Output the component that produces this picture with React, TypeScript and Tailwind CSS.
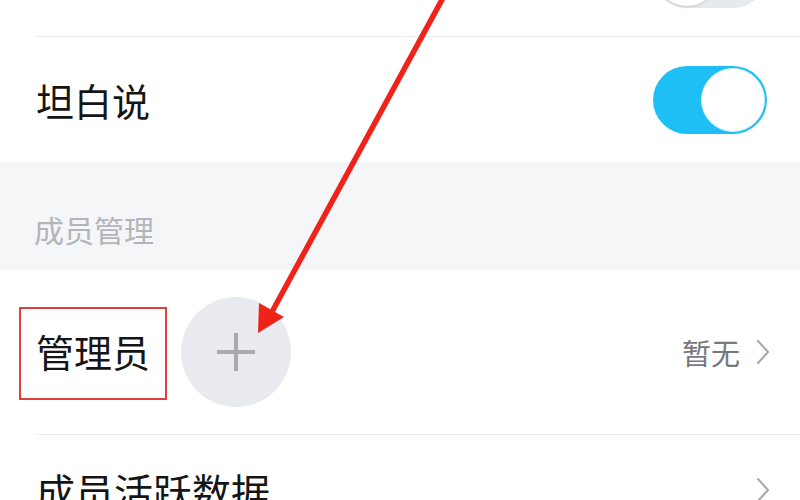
import React from "react";

const font = { fontFamily: '"Noto Sans CJK SC", "Noto Sans", sans-serif' };

function Chevron() {
  return (
    <svg width="14" height="28" viewBox="0 0 14 28" className="shrink-0">
      <path d="M2 3 L12 14 L2 25" fill="none" stroke="#a9abb0" strokeWidth="2.2" strokeLinecap="round" strokeLinejoin="round" />
    </svg>
  );
}

export default function App() {
  return (
    <div className="relative w-[800px] h-[500px] overflow-hidden bg-white" style={font}>
      <div className="flex flex-col -mt-[89px]">
        {/* row 1 (cut off) */}
        <div className="h-[125px] flex items-center justify-between pl-[36px] pr-[33px] bg-white">
          <span className="text-[38px] leading-none text-[#222]">匿名聊天</span>
          <div className="w-[114px] h-[68px] rounded-full bg-[#e8e9ef] p-[2px] flex items-center">
            <div className="w-[64px] h-[64px] rounded-full bg-white shadow-[0_1px_3px_rgba(0,0,0,0.15)]" />
          </div>
        </div>
        <div className="ml-[36px] h-px bg-[#ececee]" />
        {/* row 2 */}
        <div className="h-[125px] flex items-center justify-between pl-[36px] pr-[33px] bg-white">
          <span className="text-[38px] leading-none text-[#151515]">坦白说</span>
          <div className="w-[114px] h-[68px] rounded-full bg-[#1ebff4] p-[2px] flex items-center justify-end">
            <div className="w-[64px] h-[64px] rounded-full bg-white border border-[#d6eef8]" />
          </div>
        </div>
        {/* section header */}
        <div className="h-[108px] bg-[#f5f6f8] flex items-end pl-[34px] pb-[26px]">
          <span className="text-[30px] leading-none text-[#b3b5ba]">成员管理</span>
        </div>
        {/* row 3 */}
        <div className="h-[164px] flex items-center justify-between pl-[36px] pr-[30px] bg-white">
          <div className="flex items-center">
            <div className="relative">
              <span className="text-[38px] leading-none text-[#151515]">管理员</span>
              <div className="absolute -left-[17px] -right-[17px] -top-[25px] -bottom-[28px] border-2 border-[#e0403c]" />
            </div>
            <div className="ml-[31px] w-[110px] h-[110px] rounded-full bg-[#e9ebf0] flex items-center justify-center">
              <svg width="42" height="42" viewBox="0 0 42 42">
                <path d="M21 2 V40 M2 21 H40" stroke="#a6a9b0" strokeWidth="4" />
              </svg>
            </div>
          </div>
          <div className="flex items-center gap-[16px]">
            <span className="text-[29px] leading-none text-[#75787d]">暂无</span>
            <Chevron />
          </div>
        </div>
        <div className="ml-[36px] h-px bg-[#ececee]" />
        {/* row 4 */}
        <div className="h-[110px] flex items-center justify-between pl-[36px] pr-[30px] bg-white">
          <span className="text-[39px] leading-none text-[#151515]">成员活跃数据</span>
          <Chevron />
        </div>
      </div>
      {/* red arrow annotation */}
      <svg className="absolute inset-0 pointer-events-none" width="800" height="500" viewBox="0 0 800 500">
        <line x1="444" y1="-4" x2="273" y2="310" stroke="#f0231b" strokeWidth="5.5" strokeLinecap="round" />
        <polygon points="258,333 259,303 284,317" fill="#f0231b" />
      </svg>
    </div>
  );
}
